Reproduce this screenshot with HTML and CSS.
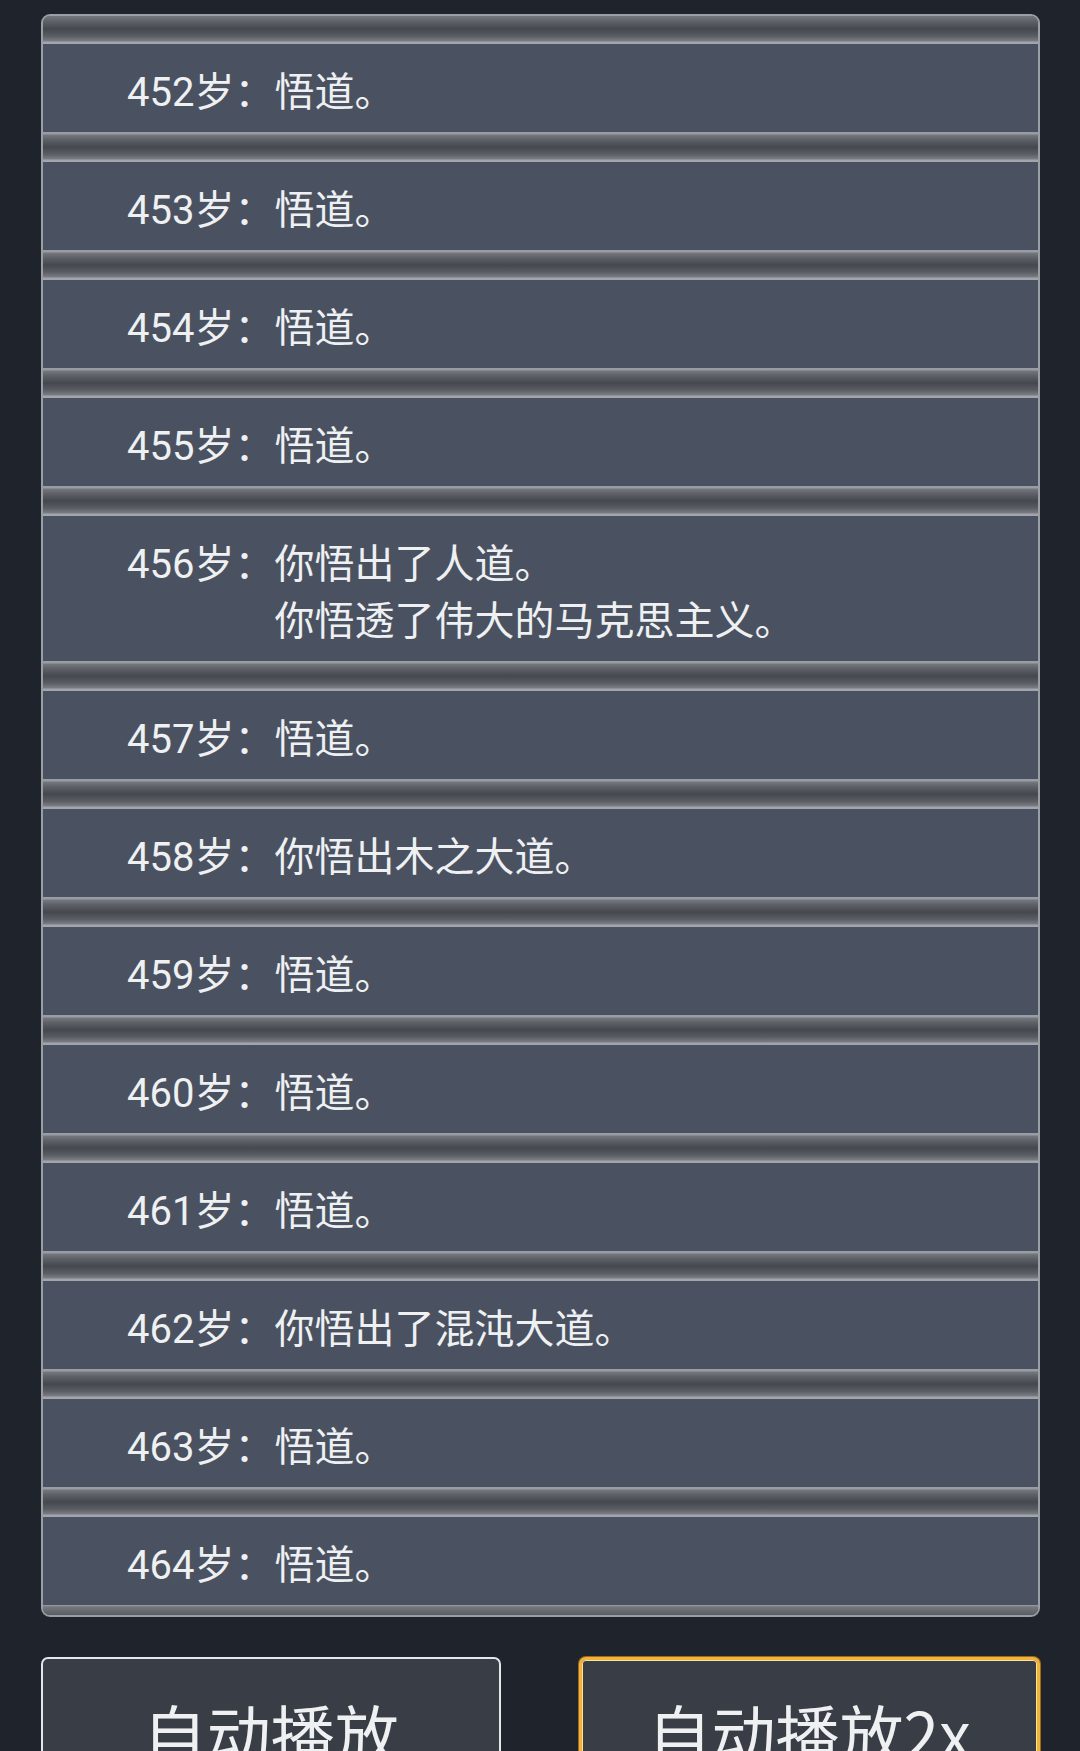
FILE: index.html
```html
<!DOCTYPE html>
<html lang="zh-CN">
<head>
<meta charset="utf-8">
<title>人生记录</title>
<link rel="stylesheet" href="styles.css">
</head>
<body>
<div class="page">
  <div class="panel">
    <div class="sep first"></div>
    <div class="row"><span class="age">452岁：</span><div class="text"><div>悟道。</div></div></div>
    <div class="sep"></div>
    <div class="row"><span class="age">453岁：</span><div class="text"><div>悟道。</div></div></div>
    <div class="sep"></div>
    <div class="row"><span class="age">454岁：</span><div class="text"><div>悟道。</div></div></div>
    <div class="sep"></div>
    <div class="row"><span class="age">455岁：</span><div class="text"><div>悟道。</div></div></div>
    <div class="sep"></div>
    <div class="row"><span class="age">456岁：</span><div class="text"><div>你悟出了人道。</div><div>你悟透了伟大的马克思主义。</div></div></div>
    <div class="sep"></div>
    <div class="row"><span class="age">457岁：</span><div class="text"><div>悟道。</div></div></div>
    <div class="sep"></div>
    <div class="row"><span class="age">458岁：</span><div class="text"><div>你悟出木之大道。</div></div></div>
    <div class="sep"></div>
    <div class="row"><span class="age">459岁：</span><div class="text"><div>悟道。</div></div></div>
    <div class="sep"></div>
    <div class="row"><span class="age">460岁：</span><div class="text"><div>悟道。</div></div></div>
    <div class="sep"></div>
    <div class="row"><span class="age">461岁：</span><div class="text"><div>悟道。</div></div></div>
    <div class="sep"></div>
    <div class="row"><span class="age">462岁：</span><div class="text"><div>你悟出了混沌大道。</div></div></div>
    <div class="sep"></div>
    <div class="row"><span class="age">463岁：</span><div class="text"><div>悟道。</div></div></div>
    <div class="sep"></div>
    <div class="row"><span class="age">464岁：</span><div class="text"><div>悟道。</div></div></div>
    <div class="foot"></div>
  </div>
  <div class="buttons">
    <button class="btn">自动播放</button>
    <button class="btn gold">自动播放2x</button>
  </div>
</div>
</body>
</html>
```

FILE: styles.css
```css
html, body {
  margin: 0;
  padding: 0;
  background: #1f242c;
  height: 100%;
  overflow: hidden;
}

.page {
  padding: 14px 40px 0 41px;
  font-family: Roboto, "Noto Sans CJK SC", sans-serif;
  color: #eef0f2;
}

.panel {
  border: 2px solid #9a9ea5;
  border-radius: 9px;
  overflow: hidden;
  background: #4a5261;
}

.sep {
  height: 30px;
  background: linear-gradient(to bottom,
    #989ca3 0px, #989ca3 2px,
    #74777d 3px,
    #5c5f65 8px,
    #45484f 15px,
    #595c62 22px,
    #7a7d83 27px,
    #a2a6ac 28px, #a2a6ac 30px);
}

.sep.first {
  height: 28px;
  background: linear-gradient(to bottom,
    #74777d 0px,
    #5c5f65 6px,
    #45484f 13px,
    #595c62 20px,
    #7a7d83 25px,
    #a2a6ac 26px, #a2a6ac 28px);
}

.row {
  display: flex;
  padding: 20px 20px 11px 84px;
  font-size: 40px;
  line-height: 57px;
  background: #4a5261;
}

.age {
  flex: none;
  white-space: nowrap;
}

.text {
  flex: 1;
}

.foot {
  height: 10px;
  background: linear-gradient(to bottom, #9a9ea5 0px, #74777d 2px, #5a5d63 10px);
}

.buttons {
  display: flex;
  gap: 78px;
  margin-top: 40px;
}

.btn {
  flex: 1;
  height: 130px;
  background: #393d45;
  border: 2px solid #e4e6e8;
  border-radius: 7px;
  color: #eef0f2;
  font-family: "Noto Sans CJK SC", sans-serif;
  font-size: 64px;
  line-height: 76px;
  padding: 18px 0 0 0;
  text-align: center;
  display: block;
  box-sizing: border-box;
}

.btn.gold {
  border: 3px solid #f0b43a;
  box-shadow: 0 0 0 1px #a0681a, inset 0 0 0 1px #f8e2a0;
  padding-top: 17px;
}
```
